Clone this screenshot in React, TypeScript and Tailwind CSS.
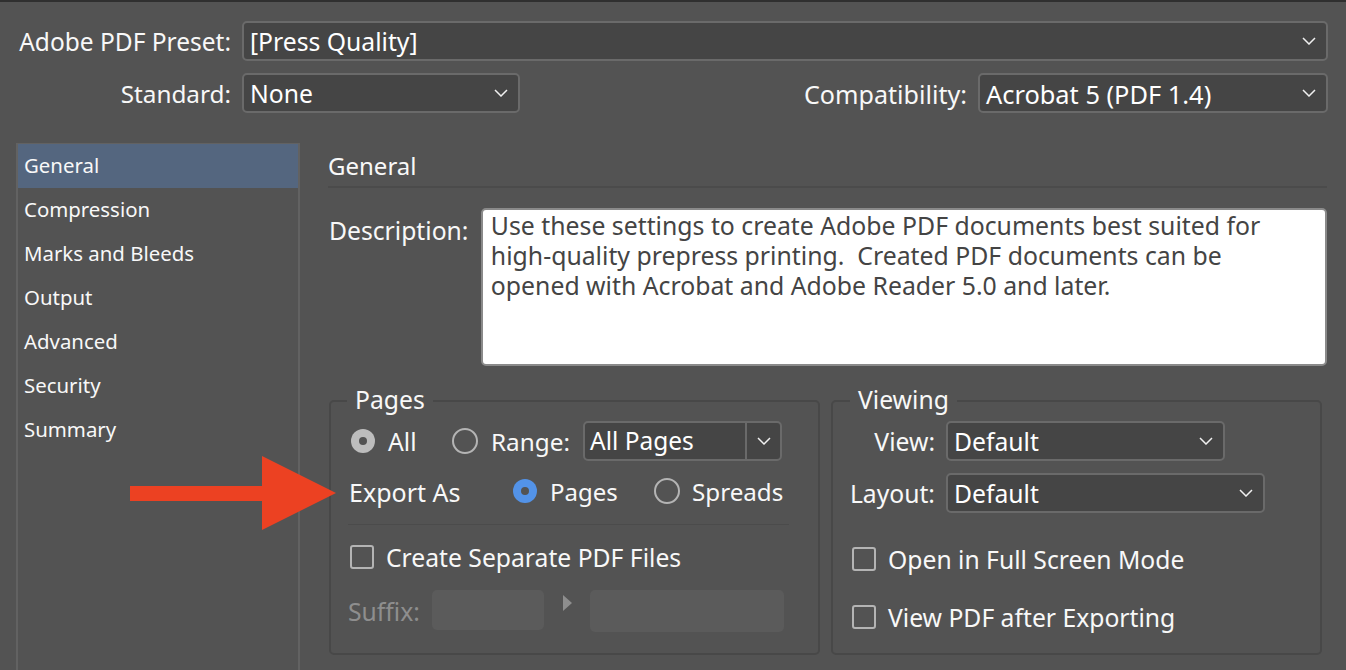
import React from 'react';

const sections = ['General', 'Compression', 'Marks and Bleeds', 'Output', 'Advanced', 'Security', 'Summary'];

function Chevron() {
  return (
    <svg width="14" height="8" viewBox="0 0 14 8" fill="none" className="shrink-0">
      <path d="M1 1l6 6 6-6" stroke="#f0f0f0" strokeWidth="1.5" />
    </svg>
  );
}

function Select({ value, className }: { value: string; className: string }) {
  return (
    <div className={`flex h-10 shrink-0 items-center justify-between rounded-[5px] border-2 border-[#6a6a6a] bg-[#454545] pl-[6px] pr-[10px] text-white ${className}`}>
      <span className="pt-[1px]">{value}</span>
      <Chevron />
    </div>
  );
}

function Radio({ state, className }: { state: 'off' | 'gray' | 'blue'; className: string }) {
  if (state === 'off') {
    return <span className={`h-[26px] w-[26px] shrink-0 rounded-full border-2 border-[#b4b4b4] ${className}`} />;
  }
  return (
    <span className={`flex h-6 w-6 shrink-0 items-center justify-center rounded-full ${state === 'blue' ? 'bg-[#5393e8]' : 'bg-[#bdbdbd]'} ${className}`}>
      <span className="h-2 w-2 rounded-full bg-[#535353]" />
    </span>
  );
}

function Checkbox({ label, className }: { label: string; className: string }) {
  return (
    <div className={`flex items-center ${className}`}>
      <span className="h-6 w-6 shrink-0 rounded-[3px] border-2 border-[#b4b4b4]" />
      <span className="ml-3 whitespace-nowrap pt-[2px]">{label}</span>
    </div>
  );
}

export default function App() {
  return (
    <div className="relative h-[670px] w-[1346px] overflow-hidden border-t-2 border-[#2f2f2f] bg-[#535353] font-['Noto_Sans',sans-serif] text-[24.7px] leading-[30px] text-[#f8f8f8]">
      {/* preset rows */}
      <div className="mt-[19px] flex h-10 items-center">
        <span className="w-[231px] whitespace-nowrap pt-[2px] text-right text-[24.5px]">Adobe PDF Preset:</span>
        <Select value="[Press Quality]" className="ml-[11px] w-[1086px]" />
      </div>
      <div className="mt-3 flex h-10 items-center">
        <span className="w-[231px] pt-[2px] text-right text-[24.3px]">Standard:</span>
        <Select value="None" className="ml-[11px] w-[278px]" />
        <span className="ml-auto whitespace-nowrap pt-[2px] text-[25.1px]">Compatibility:</span>
        <Select value="Acrobat 5 (PDF 1.4)" className="ml-[11px] mr-[18px] w-[350px] text-[25.4px]" />
      </div>

      <div className="mt-[30px] flex">
        {/* section list */}
        <div className="ml-4 h-[540px] w-[284px] shrink-0 border-x-2 border-t border-[#626262] text-[20.4px]">
          {sections.map((s, i) => (
            <div key={s} className={`flex h-11 items-center pb-[2px] pl-[6px] ${i === 0 ? 'bg-[#54667f]' : ''}`}>
              {s}
            </div>
          ))}
        </div>

        <div className="ml-[28px] w-[999px] shrink-0">
          <div className="flex h-[45px] items-center border-b-2 border-[#4b4b4b] pt-[3px] text-[24px]">General</div>

          <div className="mt-5 flex">
            <span className="ml-[1px] mt-2 w-[152px]">Description:</span>
            <div className="h-[158px] w-[847px] rounded-[5px] border-2 border-[#8a8a8a] bg-white px-[8px] text-[24.8px] text-[#444444]">
              Use these settings to create Adobe PDF documents best suited for
              <br />
              high-quality prepress printing.&nbsp; Created PDF documents can be
              <br />
              opened with Acrobat and Adobe Reader 5.0 and later.
            </div>
          </div>

          <div className="mt-[17px] flex gap-[11px]">
            {/* pages */}
            <fieldset className="ml-[1px] h-[272px] w-[491px] shrink-0 rounded-[5px] border-2 border-[#484848]">
              <legend className="ml-[16px] px-2 pb-[2px] leading-[34px]">Pages</legend>
              <div className="mt-[2px] flex h-10 items-center pl-[20px]">
                <Radio state="gray" className="" />
                <span className="ml-[13px] w-[28px] pt-[2px]">All</span>
                <Radio state="off" className="ml-[36px]" />
                <span className="ml-[13px] w-[78px] whitespace-nowrap pt-[2px] text-[24.3px]">Range:</span>
                <div className="ml-[14px] flex h-10 w-[199px] shrink-0 rounded-[5px] border-2 border-[#6a6a6a] bg-[#454545] text-white">
                  <span className="flex-1 pl-[5px] leading-[36px] text-[24.5px]">All Pages</span>
                  <span className="flex w-[35px] items-center justify-center border-l-2 border-[#6a6a6a]">
                    <Chevron />
                  </span>
                </div>
              </div>
              <div className="mt-[10px] flex h-10 items-center pl-[18px]">
                <span className="w-[164px] pt-[2px] text-[25px]">Export As</span>
                <Radio state="blue" className="" />
                <span className="ml-[13px] w-[91px] pt-[2px] text-[24px]">Pages</span>
                <Radio state="off" className="ml-[13px]" />
                <span className="ml-3 pt-[2px] text-[24.2px]">Spreads</span>
              </div>
              <div className="ml-[17px] mt-[13px] w-[441px] border-t border-[#4b4b4b]" />
              <Checkbox label="Create Separate PDF Files" className="ml-[19px] mt-[16px]" />
              <div className="mt-[17px] flex items-start pl-[17px] text-[#8e8e8e]">
                <span className="mt-[6px] w-[84px] pt-[1px]">Suffix:</span>
                <span className="h-10 w-[112px] rounded-[5px] bg-[#5b5b5b]" />
                <span className="ml-[19px] mt-[5px] h-0 w-0 border-y-8 border-l-[9px] border-y-transparent border-l-[#8e8e8e]" />
                <span className="ml-[18px] h-[42px] w-[194px] rounded-[5px] bg-[#5b5b5b]" />
              </div>
            </fieldset>

            {/* viewing */}
            <fieldset className="h-[272px] w-[491px] shrink-0 rounded-[5px] border-2 border-[#484848]">
              <legend className="ml-[17px] px-2 pb-[2px] leading-[34px]">Viewing</legend>
              <div className="mt-[2px] flex h-10 items-center">
                <span className="w-[102px] pt-[2px] text-right">View:</span>
                <Select value="Default" className="ml-[11px] w-[279px]" />
              </div>
              <div className="mt-3 flex h-10 items-center">
                <span className="w-[102px] pt-[2px] text-right">Layout:</span>
                <Select value="Default" className="ml-[11px] w-[319px]" />
              </div>
              <Checkbox label="Open in Full Screen Mode" className="ml-[19px] mt-[30px]" />
              <Checkbox label="View PDF after Exporting" className="ml-[19px] mt-[26px]" />
            </fieldset>
          </div>
        </div>
      </div>

      {/* annotation arrow */}
      <svg width="206" height="76" viewBox="0 0 206 76" className="absolute left-[130px] top-[454px]">
        <polygon points="0,30 132,30 132,0 206,37 132,74 132,45 0,45" fill="#ec4122" />
      </svg>
    </div>
  );
}
